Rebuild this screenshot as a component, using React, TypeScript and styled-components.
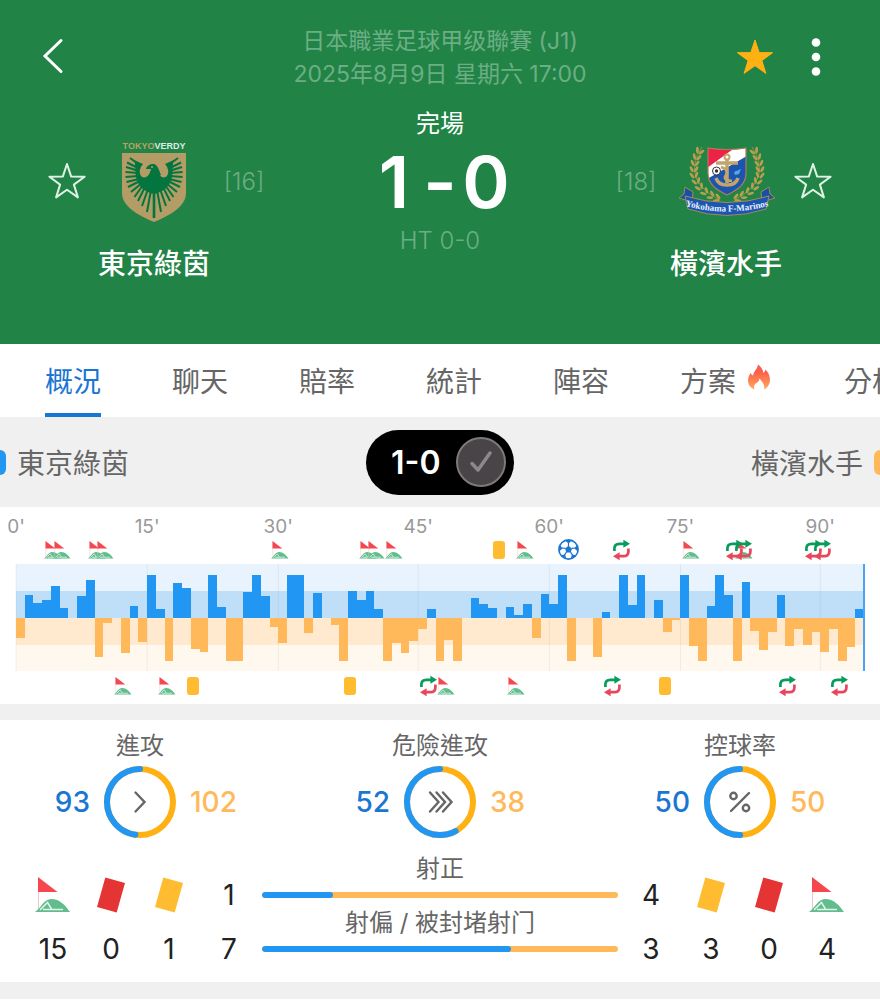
import React from "react";
import styled, { createGlobalStyle } from "styled-components";

const color = {
  pitch: "#218346",
  pitchText: "#6cae84",
  home: "#2196f3",
  homeText: "#1976d2",
  away: "#ffb95a",
  ringAway: "#ffb012",
  grey: "#f0f0f0",
  text: "#666666",
  card: "#ffbc30",
  red: "#e53434",
};

const GlobalStyle = createGlobalStyle`
  *, *::before, *::after { box-sizing: border-box; }
  body {
    margin: 0;
    background: #fff;
    color: ${color.text};
    font-family: Inter, "Noto Sans CJK TC", sans-serif;
    overflow-x: hidden;
  }
  button {
    padding: 0;
    border: 0;
    background: none;
    color: inherit;
    font: inherit;
    cursor: pointer;
  }
  svg { display: block; flex: none; overflow: visible; }
`;

/* ---------- header ---------- */

const Header = styled.header`
  background: ${color.pitch};
  color: #fff;
  padding: 25px 0 60px;
`;

const TopBar = styled.div`
  display: grid;
  grid-template-columns: 1fr auto 1fr;
  padding: 0 42px;
`;

const BackButton = styled.button`
  display: flex;
  align-items: center;
  justify-self: start;
  height: 62px;
`;

const Actions = styled.div`
  display: flex;
  justify-self: end;
  align-items: center;
  gap: 28px;
  height: 64px;
  padding-right: 7px;
`;

const Competition = styled.div`
  text-align: center;
  font-size: 23px;
  line-height: 33px;
  color: ${color.pitchText};
`;

const Match = styled.div`
  display: flex;
  justify-content: space-between;
  padding: 16px 48px 0;
`;

const TeamBlock = styled.section<{ $side: "home" | "away" }>`
  display: grid;
  grid-template-columns: ${(p) => (p.$side === "home" ? "38px 112px 44px" : "44px 112px 38px")};
  grid-template-areas: ${(p) =>
    p.$side === "home" ? `"star crest rank" ". name ."` : `"rank crest star" ". name ."`};
  grid-template-rows: 84px 40px;
  gap: 21px 12px;
  align-items: center;
  justify-items: center;
  padding-top: 32px;
`;

const FavouriteButton = styled.button`
  grid-area: star;
`;
const CrestSlot = styled.div`
  grid-area: crest;
`;
const Rank = styled.span`
  grid-area: rank;
  font-size: 24px;
  font-weight: 300;
  color: ${color.pitchText};
`;
const TeamName = styled.h2`
  grid-area: name;
  margin: 0;
  font-size: 28px;
  line-height: 40px;
  font-weight: 500;
  white-space: nowrap;
`;

const Result = styled.div`
  display: flex;
  flex-direction: column;
  align-items: center;
`;
const Status = styled.span`
  font-size: 24px;
  line-height: 34px;
`;
const Score = styled.div`
  display: grid;
  grid-template-columns: 48px 44px 48px;
  justify-items: center;
  font-size: 72px;
  line-height: 82px;
  font-weight: 600;
`;
const HalfTime = styled.span`
  font-size: 24px;
  line-height: 36px;
  font-weight: 300;
  color: ${color.pitchText};
`;

/* ---------- tabs ---------- */

const Tabs = styled.nav`
  display: flex;
  gap: 71px;
  height: 73px;
  padding-left: 45px;
  overflow: hidden;
`;

const Tab = styled.button<{ $active?: boolean }>`
  flex: none;
  display: flex;
  align-items: center;
  font-size: 28px;
  white-space: nowrap;
  border-top: 2px solid transparent;
  border-bottom: 4px solid ${(p) => (p.$active ? color.homeText : "transparent")};
  color: ${(p) => (p.$active ? color.homeText : color.text)};
`;

const HotMark = styled.span`
  padding: 0 3px 6px 12px;
`;

/* ---------- score strip ---------- */

const Strip = styled.div`
  display: grid;
  grid-template-columns: 1fr auto 1fr;
  align-items: center;
  height: 90px;
  background: ${color.grey};
  font-size: 28px;
`;

const StripTeam = styled.div<{ $side: "home" | "away" }>`
  display: flex;
  flex-direction: ${(p) => (p.$side === "home" ? "row" : "row-reverse")};
  align-items: center;
  gap: 11px;
  &::before {
    content: "";
    width: 6px;
    height: 25px;
    background: ${(p) => (p.$side === "home" ? color.home : color.away)};
    border-radius: ${(p) => (p.$side === "home" ? "0 6px 6px 0" : "6px 0 0 6px")};
  }
`;

const ScorePill = styled.button`
  display: flex;
  align-items: center;
  justify-content: space-between;
  width: 148px;
  height: 65px;
  padding: 0 8px 0 25px;
  border-radius: 33px;
  background: #000;
  color: #fff;
  font-size: 32px;
  font-weight: 600;
`;

const PillKnob = styled.span`
  display: flex;
  align-items: center;
  justify-content: center;
  width: 50px;
  height: 50px;
  border: 2px solid #7c7a7b;
  border-radius: 50%;
  background: #484447;
`;

/* ---------- timeline ---------- */

const Timeline = styled.section`
  padding: 8px 16px;
`;

const MinuteRow = styled.div<{ $height: number }>`
  display: grid;
  grid-template-columns: repeat(97, minmax(0, 1fr));
  align-items: center;
  height: ${(p) => p.$height}px;
`;

const EventRow = styled(MinuteRow)`
  margin: 0 -2px 0 2px;
`;

const AtMinute = styled.span<{ $minute: number }>`
  grid-row: 1;
  grid-column: ${(p) => p.$minute + 1};
  display: flex;
  justify-content: center;
  width: 0;
  font-size: 19px;
  line-height: 24px;
  color: #999;
`;

const Chart = styled.svg`
  width: 100%;
  height: 107px;
  margin: 5px 0;
`;

const Divider = styled.div<{ $height: number }>`
  height: ${(p) => p.$height}px;
  background: ${color.grey};
`;

/* ---------- statistics ---------- */

const Stats = styled.section`
  padding: 9px 0 17px;
`;

const Gauges = styled.div`
  display: flex;
  justify-content: space-between;
  padding: 0 40px;
`;

const Gauge = styled.div`
  width: 200px;
`;

const GaugeTitle = styled.h3`
  margin: 0 0 3px;
  font-size: 24px;
  line-height: 34px;
  font-weight: 400;
  text-align: center;
`;

const GaugeBody = styled.div`
  display: grid;
  grid-template-columns: 1fr 72px 1fr;
  align-items: center;
  gap: 14px;
`;

const GaugeValue = styled.span<{ $side: "home" | "away" }>`
  justify-self: ${(p) => (p.$side === "home" ? "end" : "start")};
  color: ${(p) => (p.$side === "home" ? color.homeText : color.away)};
  font-size: 28px;
  font-weight: 500;
`;

const Totals = styled.div`
  display: grid;
  grid-template-columns: repeat(3, 58px) 62px minmax(0, 1fr) 62px repeat(3, 58px);
  grid-auto-rows: 54px;
  align-items: end;
  justify-items: center;
  margin-top: 19px;
  padding: 0 24px;
`;

const Total = styled.span`
  display: flex;
  align-items: center;
  height: 32px;
  font-size: 28px;
  color: #222;
`;

const Comparison = styled.div`
  justify-self: stretch;
  padding: 0 2px;
  text-align: center;
  font-size: 24px;
  line-height: 20px;
`;

const BarSlot = styled.div`
  display: flex;
  align-items: center;
  height: 32px;
`;

const Bar = styled.div`
  flex: 1;
  height: 6px;
  border-radius: 3px;
  background: ${color.away};
  overflow: hidden;
`;

const BarFill = styled.div`
  height: 100%;
  border-radius: 3px;
  background: ${color.home};
`;

/* ---------- icons ---------- */

const STAR = "M18 1 L22.2 13.6 L35.6 13.7 L24.9 21.6 L28.9 34.4 L18 26.7 L7.1 34.4 L11.1 21.6 L0.4 13.7 L13.8 13.6 Z";

const StarIcon = ({ filled }: { filled?: boolean }) => (
  <svg width="36" height="36" viewBox="0 0 36 36" aria-hidden="true">
    <path
      d={STAR}
      fill={filled ? "#ffb012" : "none"}
      stroke={filled ? "#ffb012" : "#dff3e5"}
      strokeWidth={filled ? 1 : 2}
      strokeLinejoin={filled ? "miter" : "round"}
    />
  </svg>
);

const CornerIcon = ({ size }: { size: number }) => (
  <svg width={size} height={size} viewBox="0 0 36 36" aria-hidden="true">
    <path d="M3.5 1 V33" stroke="#f3c3c6" strokeWidth="1" />
    <path d="M3 0 L22.500 15 H3 Z" fill="#f5484e" />
    <path d="M0 35 C6 31 9 22 16 22 C25 22 30 28 35 35 Z" fill="#62bd8c" />
    <path d="M5 33 L12.500 25.500 L16.500 32 M8 32.500 H28" fill="none" stroke="#e4f5eb" strokeWidth="1.500" />
  </svg>
);

const CardIcon = ({ fill }: { fill: string }) => (
  <svg width="28" height="36" viewBox="0 0 28 36" aria-hidden="true">
    <path d="M8.300 0.500 L28 6 L19.700 35.500 L0 30 Z" fill={fill} />
  </svg>
);

const BookingIcon = () => (
  <svg width="12" height="18" viewBox="0 0 12 18" aria-hidden="true">
    <rect width="12" height="18" rx="3" fill={color.card} />
  </svg>
);

const SubIcon = () => (
  <svg width="17" height="20" viewBox="0 0 17 20" aria-hidden="true">
    <path d="M1.400 11 V8.500 Q1.400 3.800 6.400 3.800 H11.500" fill="none" stroke="#089c5c" strokeWidth="2.700" />
    <path d="M10.400 -0.200 L17 3.800 L10.400 7.800 Z" fill="#089c5c" />
    <path d="M15.400 8.500 V11.500 Q15.400 16.200 10.400 16.200 H5.500" fill="none" stroke="#e8465c" strokeWidth="2.700" />
    <path d="M6.600 12.200 L0 16.200 L6.600 20.200 Z" fill="#e8465c" />
  </svg>
);

const BallIcon = () => (
  <svg width="21" height="21" viewBox="0 0 21 21" aria-hidden="true">
    <circle cx="10.500" cy="10.500" r="9.600" fill="#fff" stroke={color.homeText} strokeWidth="1.600" />
    <g fill={color.homeText}>
      <path d="M10.500 6.800 L14 9.400 L12.700 13.400 H8.300 L7 9.400 Z" />
      <path d="M6.800 1.200 H14.200 L10.500 4.600 Z" />
      <path d="M19.300 5.500 L20.200 12.800 L16.400 9.400 Z" />
      <path d="M1.700 5.500 L0.800 12.800 L4.600 9.400 Z" />
      <path d="M18.200 16.200 L12.500 20 L14 15.400 Z" />
      <path d="M2.800 16.200 L8.500 20 L7 15.400 Z" />
    </g>
    <path
      d="M10.500 7 V3.500 M13.800 9.400 L17.300 9 M12.500 13.200 L14.600 16.200 M8.500 13.200 L6.400 16.200 M7.200 9.400 L3.700 9"
      stroke={color.homeText}
      strokeWidth="1.200"
    />
  </svg>
);

const FlameIcon = () => (
  <svg width="22" height="26" viewBox="0 0 22 25" aria-hidden="true">
    <defs>
      <linearGradient id="flame" x1="0" y1="0" x2="0" y2="1">
        <stop offset="0.3" stopColor="#fb5f4b" />
        <stop offset="1" stopColor="#ffaa5e" />
      </linearGradient>
    </defs>
    <path
      fill="url(#flame)"
      d="M10 0 C13 2 15 5 15.300 8.500 C16.600 7.800 17.200 6.500 17.400 5 C20.500 8 22 11.500 22 15 C22 19.500 20 22.800 16.200 25 C17 20.500 14.500 17.500 11.500 14 C11.200 17 9.500 18 7.500 19.200 C5.800 20.800 5.800 23 6.500 25 C2.500 23.500 0 20 0 16 C0 12.500 1.500 10.500 2.600 8.500 C3.200 9.600 3.800 10.500 5 11 C5.800 6.500 9.500 4.500 10 0 Z"
    />
  </svg>
);

const FEATHERS = [
  [20, 27, 9, 19], [19, 30, 6, 23.5], [18, 32, 5, 28], [17, 34, 4.5, 33], [17, 37, 4.5, 38],
  [18, 40, 5.5, 43], [19, 42, 7, 48], [21, 44, 10, 53], [22, 46, 13.5, 58], [24, 48, 17, 62],
  [27, 50, 21, 67], [30, 51, 26, 73],
];

const VerdyCrest = () => (
  <svg width="66" height="84" viewBox="0 0 66 84" role="img" aria-label="Tokyo Verdy">
    <text x="33" y="10" textAnchor="middle" fontFamily="'Liberation Sans', sans-serif" fontWeight="700" fontSize="9">
      <tspan fill="#b8a263">TOKYO</tspan>
      <tspan fill="#d8ece8">VERDY</tspan>
    </text>
    <path d="M1 14 H65 V54 C65 67 50 76 33 83 C16 76 1 67 1 54 Z" fill="#b39c66" />
    {["", "translate(66 0) scale(-1 1)"].map((t) => (
      <g key={t || "left"} transform={t || undefined} stroke="#04753f" strokeWidth="2">
        {FEATHERS.map(([x1, y1, x2, y2]) => (
          <line key={y2} x1={x1} y1={y1} x2={x2} y2={y2} />
        ))}
        <path
          stroke="none"
          fill="#04753f"
          d="M13 21 L22 25 C17 30 18 38 23 38.500 C27 38 28.500 35 29.500 32 L34 32 V55 C25 54 17 48 15 38 C14 32 15 26 13 21 Z"
        />
      </g>
    ))}
    <path d="M25 30 C26 26 30 24.500 33 25 C36.500 26 38 31 40 36 L33 40 L29 35 L30 30 Z" fill="#04753f" />
    <circle cx="31" cy="28" r="1" fill="#b39c66" />
    <path d="M33 50 V79" stroke="#04753f" strokeWidth="2.600" />
  </svg>
);

const LEAVES = [
  [22, 5, 25], [19, 11, 15], [17, 17, 8], [16, 23, 0], [16, 29, -8], [18, 35, -20],
  [21, 41, -32], [26, 46, -45], [32, 50, -58], [38, 53, -68],
];

const MarinosCrest = () => (
  <svg width="97" height="72" viewBox="0 0 97 72" role="img" aria-label="Yokohama F-Marinos">
    <defs>
      <clipPath id="marinos-shield">
        <path d="M30 3 Q49 6 68 3 V28 C68 40 59 45 49 50 C39 45 30 40 30 28 Z" />
      </clipPath>
      <path id="marinos-motto" d="M4 60 Q49 73 94 60" />
    </defs>
    {["", "translate(98 0) scale(-1 1)"].map((t) => (
      <g key={t || "left"} transform={t || undefined}>
        <path d="M24 2 C12 20 12 40 42 55" fill="none" stroke="#9c8b45" strokeWidth="1" />
        {LEAVES.map(([x, y, a]) => (
          <g key={y} transform={`translate(${x} ${y}) rotate(${a})`} fill="#b5a04f">
            <ellipse cx="-2.600" cy="0" rx="1.400" ry="3.300" transform="rotate(-28)" />
            <ellipse cx="2.600" cy="0" rx="1.400" ry="3.300" transform="rotate(28)" />
          </g>
        ))}
        <path d="M7 42 L15 47 L14 57 L1 53 L6 49 Z" fill="#1b4fa6" stroke="#a08d55" strokeWidth="1" />
      </g>
    ))}
    <g clipPath="url(#marinos-shield)">
      <rect x="29" y="2" width="40" height="50" fill="#fff" />
      <path d="M29 2 H58 L29 23 Z" fill="#ee2146" />
      <path d="M69 11 L29 34 V52 H69 Z" fill="#1b55b0" />
    </g>
    <path d="M30 3 Q49 6 68 3 V28 C68 40 59 45 49 50 C39 45 30 40 30 28 Z" fill="none" stroke="#b07a58" strokeWidth="1.200" />
    <g fill="none" stroke="#c3a56c" strokeWidth="3.500">
      <circle cx="49" cy="12" r="2.500" strokeWidth="2" />
      <path d="M49 15 V38 M38 18 H60" />
      <path d="M38 33 Q40 40 49 40 Q58 40 60 33" />
      <path d="M43 22 Q52 25 48 30 T54 36" strokeWidth="2.500" />
    </g>
    <circle cx="38.500" cy="26" r="4" fill="#fff" stroke="#333" strokeWidth="1" />
    <circle cx="38.500" cy="26" r="1.700" fill="#333" />
    <path d="M56 27 L63 24 L61 29 L57 30 Z" fill="#5da3dc" />
    <path d="M7 51 Q49 64 91 51 L88 64 Q49 77 10 64 Z" fill="#1d56b0" stroke="#a08d55" strokeWidth="1" />
    <text fontFamily="'Liberation Serif', serif" fontWeight="700" fontSize="9" fill="#e8f1ff" textAnchor="middle">
      <textPath href="#marinos-motto" startOffset="50%">Yokohama F-Marinos</textPath>
    </text>
  </svg>
);

/* ---------- data ---------- */

// Pressure per minute: positive is the home side, negative the away side.
const PRESSURE = [
  -20, 23, 15, 18, 32, 10, 0, 22, 38, -39, -5, 0, -35, 12, -24, 43, 9, -43, 35, 30, -31, -34, 43, 11, -43, -43, 26,
  43, 22, -9, -25, 43, 43, -15, 25, 0, -7, -43, 27, 18, 27, 9, -43, -25, -35, -23, -11, 9, -43, -22, -43, 0, 20, 14,
  10, 0, 11, 3, 14, -20, 24, 14, 43, -43, 0, 0, -39, 6, 0, 43, 13, 43, 0, 18, -14, -2, 43, -28, -43, 12, 43, 23, -43,
  36, -13, -32, -14, 23, -28, -11, -27, -14, -34, -11, -43, -29, 9,
];

const MARKS = [
  { at: 0, label: "0'" },
  { at: 15, label: "15'" },
  { at: 30, label: "30'" },
  { at: 46, label: "45'" },
  { at: 61, label: "60'" },
  { at: 76, label: "75'" },
  { at: 92, label: "90'" },
];

type EventKind = "corner" | "card" | "sub" | "goal";
type MatchEvent = [number, EventKind];

const HOME_EVENTS: MatchEvent[] = [
  [4, "corner"], [5, "corner"], [9, "corner"], [10, "corner"], [30, "corner"], [40, "corner"], [41, "corner"],
  [43, "corner"], [55, "card"], [58, "corner"], [63, "goal"], [69, "sub"], [77, "corner"], [83, "corner"],
  [82, "sub"], [83, "sub"], [91, "sub"], [92, "sub"],
];

const AWAY_EVENTS: MatchEvent[] = [
  [12, "corner"], [17, "corner"], [20, "card"], [38, "card"], [47, "sub"], [49, "corner"], [57, "corner"],
  [68, "sub"], [74, "card"], [88, "sub"], [94, "sub"],
];

const GAUGES = [
  { title: "進攻", home: 93, away: 102, icon: "M31.500 26.500 L40.500 36 L31.500 45.500" },
  {
    title: "危險進攻",
    home: 52,
    away: 38,
    icon: "M26 26.500 L34.500 36 L26 45.500 M32.500 26.500 L41 36 L32.500 45.500 M39 26.500 L47.500 36 L39 45.500",
  },
  { title: "控球率", home: 50, away: 50, icon: "" },
];

const EventIcon = ({ kind }: { kind: EventKind }) => {
  if (kind === "corner") return <CornerIcon size={18} />;
  if (kind === "card") return <BookingIcon />;
  if (kind === "sub") return <SubIcon />;
  return <BallIcon />;
};

const Events = ({ items }: { items: MatchEvent[] }) => (
  <EventRow $height={20}>
    {items.map(([minute, kind]) => (
      <AtMinute key={`${minute}-${kind}`} $minute={minute}>
        <EventIcon kind={kind} />
      </AtMinute>
    ))}
  </EventRow>
);

const PressureChart = () => (
  <Chart viewBox="0 0 97 107" preserveAspectRatio="none" shapeRendering="crispEdges" role="img" aria-label="進攻走勢">
    <rect width="97" height="27" fill="#e8f3fe" />
    <rect y="27" width="97" height="27" fill="#bfdff9" />
    <rect y="54" width="97" height="27" fill="#ffead0" />
    <rect y="81" width="97" height="26" fill="#fff8ee" />
    {MARKS.map(({ at }) => (
      <line key={at} x1={at} x2={at} y1="0" y2="107" stroke="#000" strokeOpacity="0.06" vectorEffect="non-scaling-stroke" />
    ))}
    {PRESSURE.map((v, i) => (
      <rect
        key={i}
        x={i}
        y={v > 0 ? 54 - v : 54}
        width="1"
        height={Math.abs(v)}
        fill={v > 0 ? color.home : color.away}
      />
    ))}
    <line x1="97" x2="97" y1="0" y2="107" stroke="#4aa3f5" strokeWidth="2" vectorEffect="non-scaling-stroke" />
  </Chart>
);

const Ring = ({ home, away, icon }: { home: number; away: number; icon: string }) => {
  const length = 2 * Math.PI * 33;
  const part = (home / (home + away)) * length;
  return (
    <svg width="72" height="72" viewBox="0 0 72 72" aria-hidden="true">
      <circle cx="36" cy="36" r="33" fill="none" stroke={color.ringAway} strokeWidth="6" />
      <circle
        cx="36"
        cy="36"
        r="33"
        fill="none"
        stroke={color.home}
        strokeWidth="6"
        strokeLinecap="round"
        strokeDasharray={`${part} ${length}`}
        transform="translate(72 0) scale(-1 1) rotate(-90 36 36)"
      />
      <g fill="none" stroke="#666" strokeWidth="2.400" strokeLinecap="round">
        {icon ? (
          <path d={icon} />
        ) : (
          <>
            <path d="M27 45 L45 27" />
            <circle cx="29.500" cy="30" r="3.200" />
            <circle cx="42" cy="42" r="3.200" />
          </>
        )}
      </g>
    </svg>
  );
};

const CompareBar = ({ label, home, away }: { label: string; home: number; away: number }) => (
  <Comparison>
    {label}
    <BarSlot>
      <Bar>
        <BarFill style={{ width: `${(home / (home + away)) * 100}%` }} />
      </Bar>
    </BarSlot>
  </Comparison>
);

export default function App() {
  return (
    <>
      <GlobalStyle />
      <Header>
        <TopBar>
          <BackButton aria-label="返回">
            <svg width="21" height="34" viewBox="0 0 21 34" aria-hidden="true">
              <path d="M19 1.500 L3 17 L19 32.500" fill="none" stroke="#fff" strokeWidth="3" strokeLinecap="round" />
            </svg>
          </BackButton>
          <Competition>
            <div>日本職業足球甲级聯賽 (J1)</div>
            <div>2025年8月9日 星期六 17:00</div>
          </Competition>
          <Actions>
            <button aria-label="收藏比賽">
              <StarIcon filled />
            </button>
            <button aria-label="更多">
              <svg width="30" height="36" viewBox="0 0 30 36" fill="#fff" aria-hidden="true">
                <circle cx="15" cy="3.500" r="4.300" />
                <circle cx="15" cy="18" r="4.300" />
                <circle cx="15" cy="32.500" r="4.300" />
              </svg>
            </button>
          </Actions>
        </TopBar>
        <Match>
          <TeamBlock $side="home">
            <FavouriteButton aria-label="收藏東京綠茵">
              <StarIcon />
            </FavouriteButton>
            <CrestSlot>
              <VerdyCrest />
            </CrestSlot>
            <Rank>[16]</Rank>
            <TeamName>東京綠茵</TeamName>
          </TeamBlock>
          <Result>
            <Status>完場</Status>
            <Score>
              <span>1</span>
              <span>-</span>
              <span>0</span>
            </Score>
            <HalfTime>HT 0-0</HalfTime>
          </Result>
          <TeamBlock $side="away">
            <Rank>[18]</Rank>
            <CrestSlot>
              <MarinosCrest />
            </CrestSlot>
            <FavouriteButton aria-label="收藏橫濱水手">
              <StarIcon />
            </FavouriteButton>
            <TeamName>橫濱水手</TeamName>
          </TeamBlock>
        </Match>
      </Header>

      <Tabs>
        <Tab $active>概況</Tab>
        <Tab>聊天</Tab>
        <Tab>賠率</Tab>
        <Tab>統計</Tab>
        <Tab>陣容</Tab>
        <Tab>
          方案
          <HotMark>
            <FlameIcon />
          </HotMark>
        </Tab>
        <Tab>分析</Tab>
      </Tabs>

      <Strip>
        <StripTeam $side="home">東京綠茵</StripTeam>
        <ScorePill aria-pressed="true">
          1-0
          <PillKnob>
            <svg width="24" height="24" viewBox="0 0 24 24" aria-hidden="true">
              <path d="M3 13.500 L9 20 L21 3" fill="none" stroke="#8b898a" strokeWidth="3.500" strokeLinecap="round" strokeLinejoin="round" />
            </svg>
          </PillKnob>
        </ScorePill>
        <StripTeam $side="away">橫濱水手</StripTeam>
      </Strip>

      <Timeline>
        <MinuteRow $height={24}>
          {MARKS.map(({ at, label }) => (
            <AtMinute key={at} $minute={at}>
              {label}
            </AtMinute>
          ))}
        </MinuteRow>
        <Events items={HOME_EVENTS} />
        <PressureChart />
        <Events items={AWAY_EVENTS} />
      </Timeline>

      <Divider $height={16} />

      <Stats>
        <Gauges>
          {GAUGES.map((g) => (
            <Gauge key={g.title}>
              <GaugeTitle>{g.title}</GaugeTitle>
              <GaugeBody>
                <GaugeValue $side="home">{g.home}</GaugeValue>
                <Ring home={g.home} away={g.away} icon={g.icon} />
                <GaugeValue $side="away">{g.away}</GaugeValue>
              </GaugeBody>
            </Gauge>
          ))}
        </Gauges>
        <Totals>
          <Total>
            <CornerIcon size={36} />
          </Total>
          <Total>
            <CardIcon fill={color.red} />
          </Total>
          <Total>
            <CardIcon fill={color.card} />
          </Total>
          <Total>1</Total>
          <CompareBar label="射正" home={1} away={4} />
          <Total>4</Total>
          <Total>
            <CardIcon fill={color.card} />
          </Total>
          <Total>
            <CardIcon fill={color.red} />
          </Total>
          <Total>
            <CornerIcon size={36} />
          </Total>

          <Total>15</Total>
          <Total>0</Total>
          <Total>1</Total>
          <Total>7</Total>
          <CompareBar label="射偏 / 被封堵射门" home={7} away={3} />
          <Total>3</Total>
          <Total>3</Total>
          <Total>0</Total>
          <Total>4</Total>
        </Totals>
      </Stats>

      <Divider $height={17} />
    </>
  );
}
